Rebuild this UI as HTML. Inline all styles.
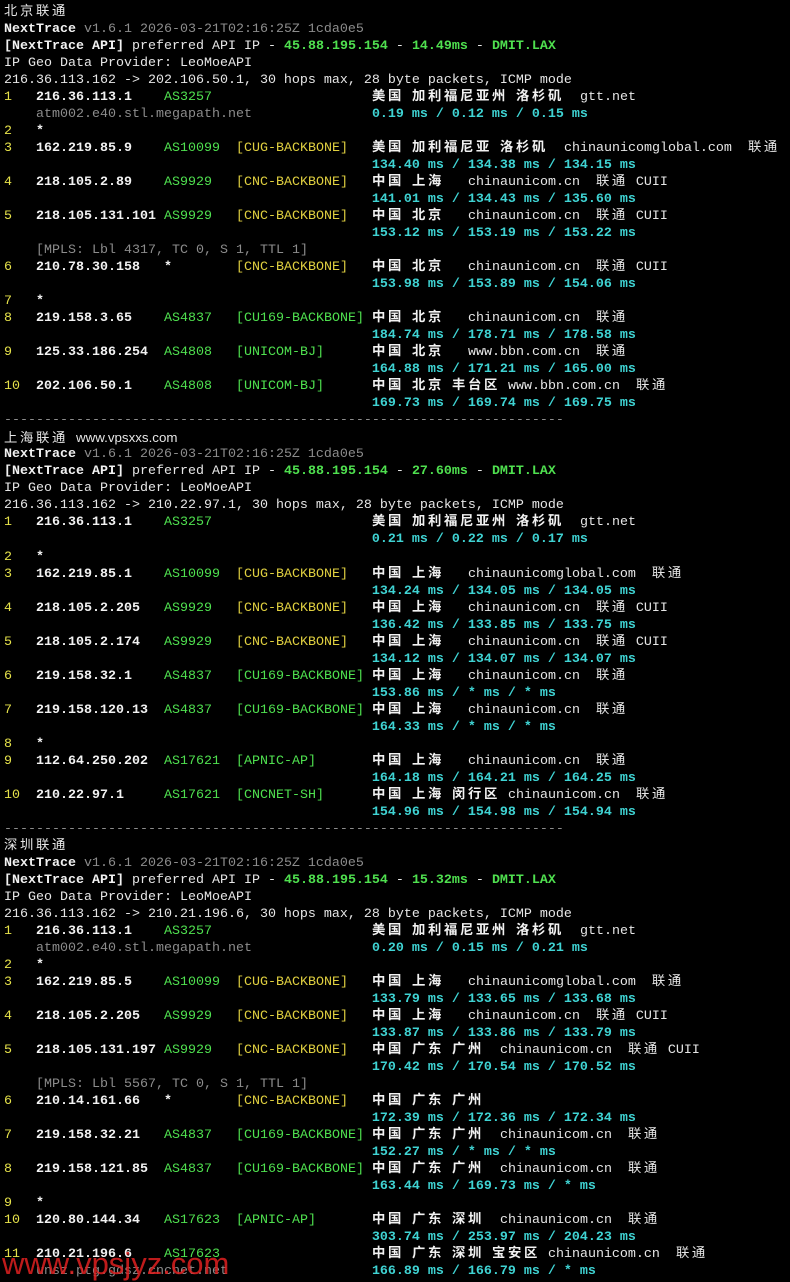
<!DOCTYPE html>
<html><head><meta charset="utf-8">
<style>
html,body{margin:0;padding:0;background:#000;}
body{width:790px;height:1280px;overflow:hidden;position:relative;}
#t{position:absolute;left:4px;top:4px;font-family:"Liberation Mono","Noto Sans CJK SC",monospace;font-size:13.33px;line-height:17.03px;color:#e6e6e6;}
#t div{white-space:pre;height:17.03px;}
.h{letter-spacing:2.67px;font-family:"Liberation Mono","Noto Sans CJK SC",monospace;}
.y{color:#e6e24a;}
.w{color:#f2f2f2;font-weight:bold;}
.g{color:#4fe04f;}
.gb{color:#4fe04f;font-weight:bold;}
.b{color:#e0d040;}
.k{color:#8c8c8c;}
.c{color:#3fd3d3;font-weight:bold;}
.s{font-family:"Liberation Sans",sans-serif;}
#wm{position:absolute;left:2px;top:1246px;font-family:"Liberation Sans",sans-serif;font-size:31px;color:#e02020;opacity:.85;}
</style></head><body>
<div id="t">
<div><span class="h">北京联通</span></div>
<div><span class="w">NextTrace</span> <span class="k">v1.6.1 2026-03-21T02:16:25Z 1cda0e5</span></div>
<div><span class="w">[NextTrace API]</span> preferred API IP - <span class="gb">45.88.195.154</span> - <span class="gb">14.49ms</span> - <span class="gb">DMIT.LAX</span></div>
<div>IP Geo Data Provider: LeoMoeAPI</div>
<div>216.36.113.162 -&gt; 202.106.50.1, 30 hops max, 28 byte packets, ICMP mode</div>
<div><span class="y">1</span>   <span class="w">216.36.113.1</span>    <span class="g">AS3257</span>                    <span class="w"><span class="h">美国</span> <span class="h">加利福尼亚州</span> <span class="h">洛杉矶</span></span>  gtt.net</div>
<div>    <span class="k">atm002.e40.stl.megapath.net</span>               <span class="c">0.19 ms / 0.12 ms / 0.15 ms</span></div>
<div><span class="y">2</span>   <span class="w">*</span></div>
<div><span class="y">3</span>   <span class="w">162.219.85.9</span>    <span class="g">AS10099</span>  <span class="b">[CUG-BACKBONE]</span>   <span class="w"><span class="h">美国</span> <span class="h">加利福尼亚</span> <span class="h">洛杉矶</span></span>  chinaunicomglobal.com  <span class="h">联通</span></div>
<div>                                              <span class="c">134.40 ms / 134.38 ms / 134.15 ms</span></div>
<div><span class="y">4</span>   <span class="w">218.105.2.89</span>    <span class="g">AS9929</span>   <span class="b">[CNC-BACKBONE]</span>   <span class="w"><span class="h">中国</span> <span class="h">上海</span></span>   chinaunicom.cn  <span class="h">联通</span> CUII</div>
<div>                                              <span class="c">141.01 ms / 134.43 ms / 135.60 ms</span></div>
<div><span class="y">5</span>   <span class="w">218.105.131.101</span> <span class="g">AS9929</span>   <span class="b">[CNC-BACKBONE]</span>   <span class="w"><span class="h">中国</span> <span class="h">北京</span></span>   chinaunicom.cn  <span class="h">联通</span> CUII</div>
<div>                                              <span class="c">153.12 ms / 153.19 ms / 153.22 ms</span></div>
<div>    <span class="k">[MPLS: Lbl 4317, TC 0, S 1, TTL 1]</span></div>
<div><span class="y">6</span>   <span class="w">210.78.30.158</span>   <span class="w">*</span>        <span class="b">[CNC-BACKBONE]</span>   <span class="w"><span class="h">中国</span> <span class="h">北京</span></span>   chinaunicom.cn  <span class="h">联通</span> CUII</div>
<div>                                              <span class="c">153.98 ms / 153.89 ms / 154.06 ms</span></div>
<div><span class="y">7</span>   <span class="w">*</span></div>
<div><span class="y">8</span>   <span class="w">219.158.3.65</span>    <span class="g">AS4837</span>   <span class="g">[CU169-BACKBONE]</span> <span class="w"><span class="h">中国</span> <span class="h">北京</span></span>   chinaunicom.cn  <span class="h">联通</span></div>
<div>                                              <span class="c">184.74 ms / 178.71 ms / 178.58 ms</span></div>
<div><span class="y">9</span>   <span class="w">125.33.186.254</span>  <span class="g">AS4808</span>   <span class="g">[UNICOM-BJ]</span>      <span class="w"><span class="h">中国</span> <span class="h">北京</span></span>   www.bbn.com.cn  <span class="h">联通</span></div>
<div>                                              <span class="c">164.88 ms / 171.21 ms / 165.00 ms</span></div>
<div><span class="y">10</span>  <span class="w">202.106.50.1</span>    <span class="g">AS4808</span>   <span class="g">[UNICOM-BJ]</span>      <span class="w"><span class="h">中国</span> <span class="h">北京</span> <span class="h">丰台区</span></span> www.bbn.com.cn  <span class="h">联通</span></div>
<div>                                              <span class="c">169.73 ms / 169.74 ms / 169.75 ms</span></div>
<div class="k">----------------------------------------------------------------------</div>
<div><span class="h">上海联通</span> <span class="s">www.vpsxxs.com</span></div>
<div><span class="w">NextTrace</span> <span class="k">v1.6.1 2026-03-21T02:16:25Z 1cda0e5</span></div>
<div><span class="w">[NextTrace API]</span> preferred API IP - <span class="gb">45.88.195.154</span> - <span class="gb">27.60ms</span> - <span class="gb">DMIT.LAX</span></div>
<div>IP Geo Data Provider: LeoMoeAPI</div>
<div>216.36.113.162 -&gt; 210.22.97.1, 30 hops max, 28 byte packets, ICMP mode</div>
<div><span class="y">1</span>   <span class="w">216.36.113.1</span>    <span class="g">AS3257</span>                    <span class="w"><span class="h">美国</span> <span class="h">加利福尼亚州</span> <span class="h">洛杉矶</span></span>  gtt.net</div>
<div>                                              <span class="c">0.21 ms / 0.22 ms / 0.17 ms</span></div>
<div><span class="y">2</span>   <span class="w">*</span></div>
<div><span class="y">3</span>   <span class="w">162.219.85.1</span>    <span class="g">AS10099</span>  <span class="b">[CUG-BACKBONE]</span>   <span class="w"><span class="h">中国</span> <span class="h">上海</span></span>   chinaunicomglobal.com  <span class="h">联通</span></div>
<div>                                              <span class="c">134.24 ms / 134.05 ms / 134.05 ms</span></div>
<div><span class="y">4</span>   <span class="w">218.105.2.205</span>   <span class="g">AS9929</span>   <span class="b">[CNC-BACKBONE]</span>   <span class="w"><span class="h">中国</span> <span class="h">上海</span></span>   chinaunicom.cn  <span class="h">联通</span> CUII</div>
<div>                                              <span class="c">136.42 ms / 133.85 ms / 133.75 ms</span></div>
<div><span class="y">5</span>   <span class="w">218.105.2.174</span>   <span class="g">AS9929</span>   <span class="b">[CNC-BACKBONE]</span>   <span class="w"><span class="h">中国</span> <span class="h">上海</span></span>   chinaunicom.cn  <span class="h">联通</span> CUII</div>
<div>                                              <span class="c">134.12 ms / 134.07 ms / 134.07 ms</span></div>
<div><span class="y">6</span>   <span class="w">219.158.32.1</span>    <span class="g">AS4837</span>   <span class="g">[CU169-BACKBONE]</span> <span class="w"><span class="h">中国</span> <span class="h">上海</span></span>   chinaunicom.cn  <span class="h">联通</span></div>
<div>                                              <span class="c">153.86 ms / * ms / * ms</span></div>
<div><span class="y">7</span>   <span class="w">219.158.120.13</span>  <span class="g">AS4837</span>   <span class="g">[CU169-BACKBONE]</span> <span class="w"><span class="h">中国</span> <span class="h">上海</span></span>   chinaunicom.cn  <span class="h">联通</span></div>
<div>                                              <span class="c">164.33 ms / * ms / * ms</span></div>
<div><span class="y">8</span>   <span class="w">*</span></div>
<div><span class="y">9</span>   <span class="w">112.64.250.202</span>  <span class="g">AS17621</span>  <span class="g">[APNIC-AP]</span>       <span class="w"><span class="h">中国</span> <span class="h">上海</span></span>   chinaunicom.cn  <span class="h">联通</span></div>
<div>                                              <span class="c">164.18 ms / 164.21 ms / 164.25 ms</span></div>
<div><span class="y">10</span>  <span class="w">210.22.97.1</span>     <span class="g">AS17621</span>  <span class="g">[CNCNET-SH]</span>      <span class="w"><span class="h">中国</span> <span class="h">上海</span> <span class="h">闵行区</span></span> chinaunicom.cn  <span class="h">联通</span></div>
<div>                                              <span class="c">154.96 ms / 154.98 ms / 154.94 ms</span></div>
<div class="k">----------------------------------------------------------------------</div>
<div><span class="h">深圳联通</span></div>
<div><span class="w">NextTrace</span> <span class="k">v1.6.1 2026-03-21T02:16:25Z 1cda0e5</span></div>
<div><span class="w">[NextTrace API]</span> preferred API IP - <span class="gb">45.88.195.154</span> - <span class="gb">15.32ms</span> - <span class="gb">DMIT.LAX</span></div>
<div>IP Geo Data Provider: LeoMoeAPI</div>
<div>216.36.113.162 -&gt; 210.21.196.6, 30 hops max, 28 byte packets, ICMP mode</div>
<div><span class="y">1</span>   <span class="w">216.36.113.1</span>    <span class="g">AS3257</span>                    <span class="w"><span class="h">美国</span> <span class="h">加利福尼亚州</span> <span class="h">洛杉矶</span></span>  gtt.net</div>
<div>    <span class="k">atm002.e40.stl.megapath.net</span>               <span class="c">0.20 ms / 0.15 ms / 0.21 ms</span></div>
<div><span class="y">2</span>   <span class="w">*</span></div>
<div><span class="y">3</span>   <span class="w">162.219.85.5</span>    <span class="g">AS10099</span>  <span class="b">[CUG-BACKBONE]</span>   <span class="w"><span class="h">中国</span> <span class="h">上海</span></span>   chinaunicomglobal.com  <span class="h">联通</span></div>
<div>                                              <span class="c">133.79 ms / 133.65 ms / 133.68 ms</span></div>
<div><span class="y">4</span>   <span class="w">218.105.2.205</span>   <span class="g">AS9929</span>   <span class="b">[CNC-BACKBONE]</span>   <span class="w"><span class="h">中国</span> <span class="h">上海</span></span>   chinaunicom.cn  <span class="h">联通</span> CUII</div>
<div>                                              <span class="c">133.87 ms / 133.86 ms / 133.79 ms</span></div>
<div><span class="y">5</span>   <span class="w">218.105.131.197</span> <span class="g">AS9929</span>   <span class="b">[CNC-BACKBONE]</span>   <span class="w"><span class="h">中国</span> <span class="h">广东</span> <span class="h">广州</span></span>  chinaunicom.cn  <span class="h">联通</span> CUII</div>
<div>                                              <span class="c">170.42 ms / 170.54 ms / 170.52 ms</span></div>
<div>    <span class="k">[MPLS: Lbl 5567, TC 0, S 1, TTL 1]</span></div>
<div><span class="y">6</span>   <span class="w">210.14.161.66</span>   <span class="w">*</span>        <span class="b">[CNC-BACKBONE]</span>   <span class="w"><span class="h">中国</span> <span class="h">广东</span> <span class="h">广州</span></span></div>
<div>                                              <span class="c">172.39 ms / 172.36 ms / 172.34 ms</span></div>
<div><span class="y">7</span>   <span class="w">219.158.32.21</span>   <span class="g">AS4837</span>   <span class="g">[CU169-BACKBONE]</span> <span class="w"><span class="h">中国</span> <span class="h">广东</span> <span class="h">广州</span></span>  chinaunicom.cn  <span class="h">联通</span></div>
<div>                                              <span class="c">152.27 ms / * ms / * ms</span></div>
<div><span class="y">8</span>   <span class="w">219.158.121.85</span>  <span class="g">AS4837</span>   <span class="g">[CU169-BACKBONE]</span> <span class="w"><span class="h">中国</span> <span class="h">广东</span> <span class="h">广州</span></span>  chinaunicom.cn  <span class="h">联通</span></div>
<div>                                              <span class="c">163.44 ms / 169.73 ms / * ms</span></div>
<div><span class="y">9</span>   <span class="w">*</span></div>
<div><span class="y">10</span>  <span class="w">120.80.144.34</span>   <span class="g">AS17623</span>  <span class="g">[APNIC-AP]</span>       <span class="w"><span class="h">中国</span> <span class="h">广东</span> <span class="h">深圳</span></span>  chinaunicom.cn  <span class="h">联通</span></div>
<div>                                              <span class="c">303.74 ms / 253.97 ms / 204.23 ms</span></div>
<div><span class="y">11</span>  <span class="w">210.21.196.6</span>    <span class="g">AS17623</span>                   <span class="w"><span class="h">中国</span> <span class="h">广东</span> <span class="h">深圳</span> <span class="h">宝安区</span></span> chinaunicom.cn  <span class="h">联通</span></div>
<div>    <span class="k">unsz.ptg.gdsz.cncnet.net</span>                  <span class="c">166.89 ms / 166.79 ms / * ms</span></div>
</div>
<div id="wm">www.vpsjyz.com</div>
</body></html>
